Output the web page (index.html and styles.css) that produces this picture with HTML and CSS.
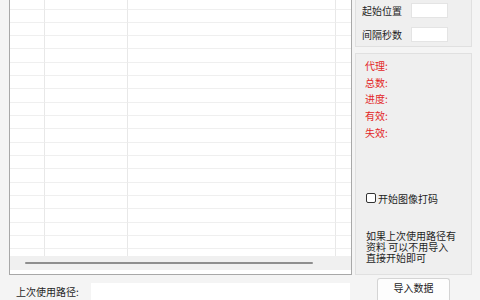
FILE: index.html
```html
<!DOCTYPE html>
<html lang="zh-CN">
<head>
<meta charset="utf-8">
<link rel="stylesheet" href="styles.css">
</head>
<body>
<div class="app">
  <div class="top">
    <div class="left">
      <div class="table">
        <div class="grid">
          <div class="c c1"></div><div class="c c2"></div><div class="c c3"></div><div class="c c4"></div>
          <div class="c c1"></div><div class="c c2"></div><div class="c c3"></div><div class="c c4"></div>
          <div class="c c1"></div><div class="c c2"></div><div class="c c3"></div><div class="c c4"></div>
          <div class="c c1"></div><div class="c c2"></div><div class="c c3"></div><div class="c c4"></div>
          <div class="c c1"></div><div class="c c2"></div><div class="c c3"></div><div class="c c4"></div>
          <div class="c c1"></div><div class="c c2"></div><div class="c c3"></div><div class="c c4"></div>
          <div class="c c1"></div><div class="c c2"></div><div class="c c3"></div><div class="c c4"></div>
          <div class="c c1"></div><div class="c c2"></div><div class="c c3"></div><div class="c c4"></div>
          <div class="c c1"></div><div class="c c2"></div><div class="c c3"></div><div class="c c4"></div>
          <div class="c c1"></div><div class="c c2"></div><div class="c c3"></div><div class="c c4"></div>
          <div class="c c1"></div><div class="c c2"></div><div class="c c3"></div><div class="c c4"></div>
          <div class="c c1"></div><div class="c c2"></div><div class="c c3"></div><div class="c c4"></div>
          <div class="c c1"></div><div class="c c2"></div><div class="c c3"></div><div class="c c4"></div>
          <div class="c c1"></div><div class="c c2"></div><div class="c c3"></div><div class="c c4"></div>
          <div class="c c1"></div><div class="c c2"></div><div class="c c3"></div><div class="c c4"></div>
          <div class="c c1"></div><div class="c c2"></div><div class="c c3"></div><div class="c c4"></div>
          <div class="c c1"></div><div class="c c2"></div><div class="c c3"></div><div class="c c4"></div>
          <div class="c c1"></div><div class="c c2"></div><div class="c c3"></div><div class="c c4"></div>
          <div class="c c1"></div><div class="c c2"></div><div class="c c3"></div><div class="c c4"></div>
          <div class="c c1 last"></div><div class="c c2 last"></div><div class="c c3 last"></div><div class="c c4 last"></div>
        </div>
        <div class="hscroll"><div class="thumb"></div></div>
      </div>
    </div>
    <div class="right">
      <div class="group g1">
        <div class="field"><span class="lbl">起始位置</span><span class="input"></span></div>
        <div class="field"><span class="lbl">间隔秒数</span><span class="input"></span></div>
      </div>
      <div class="group g2">
        <div class="stats">
          <div class="stat">代理:</div>
          <div class="stat">总数:</div>
          <div class="stat">进度:</div>
          <div class="stat">有效:</div>
          <div class="stat">失效:</div>
        </div>
        <label class="check"><span class="box"></span><span>开始图像打码</span></label>
        <div class="note">如果上次使用路径有<br>资料 可以不用导入<br>直接开始即可</div>
      </div>
    </div>
  </div>
  <div class="bottom">
    <div class="path">
      <span class="plabel">上次使用路径:</span>
      <span class="pinput"></span>
    </div>
    <button class="btn">导入数据</button>
  </div>
</div>
</body>
</html>
```

FILE: styles.css
```css
html, body {
  margin: 0;
  padding: 0;
}
body {
  width: 480px;
  height: 300px;
  overflow: hidden;
  background: #f4f4f4;
  font-family: "Noto Sans CJK SC", "Noto Sans", sans-serif;
  font-size: 10px;
  color: #1e1e1e;
}
.app {
  display: flex;
  flex-direction: column;
  height: 300px;
  overflow: hidden;
}
.top {
  display: flex;
  height: 275px;
}
.left {
  padding-left: 9px;
}
.table {
  width: 341px;
  height: 274px;
  border: 1px solid #a8a8a8;
  border-top: none;
  background: #ffffff;
  display: flex;
  flex-direction: column;
  overflow: hidden;
}
.grid {
  height: 260px;
  overflow: hidden;
  display: grid;
  grid-template-columns: 35px 83px 208px 15px;
  grid-auto-rows: 13.333px;
  margin-top: -3.83px;
}
.c {
  box-sizing: border-box;
  border-bottom: 1px solid #efefef;
  border-right: 1px solid #e8e8e8;
}
.c4 {
  border-right: none;
}
.c.last {
  border-bottom: none;
}
.hscroll {
  height: 14px;
  background: #f0f0f0;
  display: flex;
  align-items: center;
}
.thumb {
  margin-left: 15px;
  width: 288px;
  height: 2px;
  background: #8e8e8e;
  border-radius: 1px;
}
.right {
  margin-left: 3px;
  width: 117px;
  display: flex;
  flex-direction: column;
  gap: 6px;
}
.group {
  box-sizing: border-box;
  background: #efefef;
  border: 1px solid #e0e0e0;
}
.g1 {
  border-top: none;
  padding: 3px 0 4px 6px;
  display: flex;
  flex-direction: column;
  gap: 9px;
}
.field {
  display: flex;
  align-items: center;
  height: 15px;
}
.lbl {
  width: 49px;
}
.input {
  width: 37px;
  height: 15px;
  background: #ffffff;
  border: 1px solid #e4e4e4;
  box-sizing: border-box;
}
.g2 {
  flex: 1;
  padding: 4px 0 0 9px;
  display: flex;
  flex-direction: column;
}
.stats {
  color: #e32626;
}
.stat {
  height: 16.67px;
  line-height: 16.67px;
}
.check {
  margin-top: 51px;
  display: flex;
  align-items: center;
  margin-left: 1px;
  height: 12px;
}
.box {
  width: 10px;
  height: 10px;
  box-sizing: border-box;
  border: 1px solid #333333;
  border-radius: 2px;
  background: #ffffff;
  margin-right: 2px;
}
.note {
  margin-top: 26px;
  margin-left: 1px;
  line-height: 11px;
  color: #1e1e1e;
}
.bottom {
  display: flex;
  height: 25px;
  overflow: hidden;
}
.path {
  width: 350px;
  display: flex;
  padding-top: 8px;
  box-sizing: border-box;
}
.plabel {
  padding-left: 16px;
  padding-right: 10px;
  white-space: nowrap;
  line-height: 17px;
  flex: none;
}
.pinput {
  flex: 1;
  background: #ffffff;
  height: 17px;
  margin-left: 2px;
}
.btn {
  margin: 3px 0 0 27px;
  width: 73px;
  height: 22px;
  background: #fdfdfd;
  border: 1px solid #d4d4d4;
  border-bottom: none;
  border-radius: 3px 3px 0 0;
  font-family: inherit;
  font-size: 10px;
  color: #1e1e1e;
  padding: 0 0 4px 0;
}
```
